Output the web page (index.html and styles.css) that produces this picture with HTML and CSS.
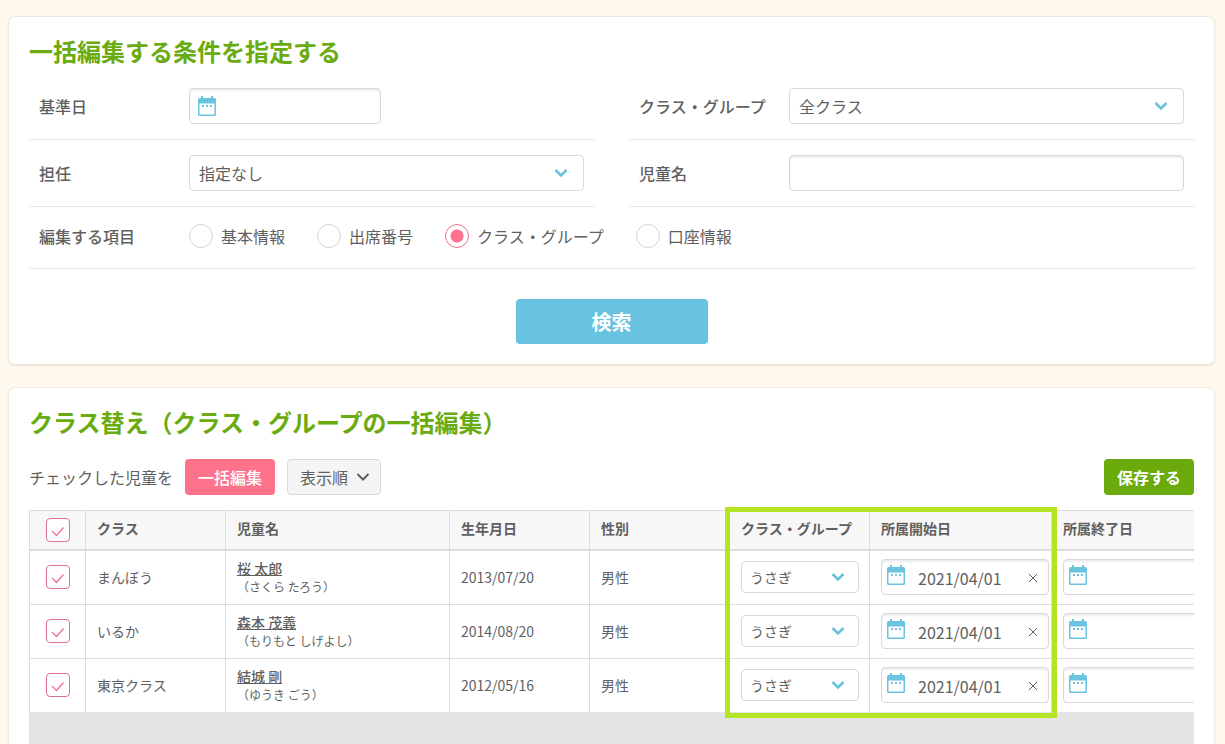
FILE: index.html
```html
<!DOCTYPE html>
<html lang="ja">
<head>
<meta charset="utf-8">
<meta name="viewport" content="width=device-width, initial-scale=1">
<title>クラス替え（クラス・グループの一括編集）</title>
<link rel="stylesheet" href="styles.css">
</head>
<body>
<svg class="sprite" aria-hidden="true">
  <symbol id="calendar" viewBox="0 0 20 22">
    <path fill="currentColor" fill-rule="evenodd" d="M4 1h2v2h8V1h2v2h1.500A1.500 1.500 0 0 1 19 4.500v15a1.500 1.500 0 0 1-1.500 1.500h-15A1.500 1.500 0 0 1 1 19.500v-15A1.500 1.500 0 0 1 2.500 3H4zM2.500 8.500v11h15v-11zM5 10h2v2H5zm4 0h2v2H9zm4 0h2v2h-2z"/>
  </symbol>
  <symbol id="chevron" viewBox="0 0 14 10">
    <path fill="none" stroke="currentColor" stroke-width="2.500" d="M1.500 2 7 7.500 12.500 2"/>
  </symbol>
  <symbol id="chevron-thin" viewBox="0 0 14 10">
    <path fill="none" stroke="currentColor" stroke-width="2" d="M1.500 2 7 7.500 12.500 2"/>
  </symbol>
</svg>
<main class="page">
  <form class="card search">
    <h2 class="title">一括編集する条件を指定する</h2>
    <div class="fields">
      <div class="field">
        <label class="label" for="base-date">基準日</label>
        <div class="control date date-short"><svg class="cal"><use href="#calendar"/></svg><input class="box inset" id="base-date" type="text"></div>
      </div>
      <div class="field">
        <label class="label" for="class-group">クラス・グループ</label>
        <div class="control"><select class="box" id="class-group"><option>全クラス</option></select><svg class="arrow"><use href="#chevron"/></svg></div>
      </div>
      <div class="field">
        <label class="label" for="teacher">担任</label>
        <div class="control"><select class="box" id="teacher"><option>指定なし</option></select><svg class="arrow"><use href="#chevron"/></svg></div>
      </div>
      <div class="field">
        <label class="label" for="child-name">児童名</label>
        <div class="control"><input class="box inset" id="child-name" type="text"></div>
      </div>
      <fieldset class="field field-wide" aria-labelledby="items-label">
        <span class="label" id="items-label">編集する項目</span>
        <div class="radios">
          <label class="option"><input class="radio" type="radio" name="item">基本情報</label>
          <label class="option"><input class="radio" type="radio" name="item">出席番号</label>
          <label class="option"><input class="radio" type="radio" name="item" checked>クラス・グループ</label>
          <label class="option"><input class="radio" type="radio" name="item">口座情報</label>
        </div>
      </fieldset>
    </div>
    <button class="submit" type="button">検索</button>
  </form>

  <section class="card results">
    <h2 class="title">クラス替え（クラス・グループの一括編集）</h2>
    <div class="toolbar">
      <span>チェックした児童を</span>
      <button class="btn btn-pink" type="button">一括編集</button>
      <button class="btn btn-gray" type="button">表示順<svg class="btn-arrow"><use href="#chevron-thin"/></svg></button>
      <button class="btn btn-green" type="button">保存する</button>
    </div>
    <div class="table-area">
      <div class="scroller">
        <table class="table">
          <colgroup><col class="c-check"><col class="c-mid"><col class="c-name"><col class="c-mid"><col class="c-mid"><col class="c-mid"><col class="c-date"><col class="c-date"></colgroup>
          <thead>
            <tr><th class="check-cell"><input class="check" type="checkbox" checked aria-label="すべて選択"></th><th>クラス</th><th>児童名</th><th>生年月日</th><th>性別</th><th>クラス・グループ</th><th>所属開始日</th><th>所属終了日</th></tr>
          </thead>
          <tbody>
            <tr>
              <td class="check-cell"><input class="check" type="checkbox" checked aria-label="桜 太郎"></td>
              <td>まんぼう</td>
              <td><a class="name" href="#">桜 太郎</a><span class="kana">（さくら たろう）</span></td>
              <td>2013/07/20</td><td>男性</td>
              <td><div class="control small"><select class="box" aria-label="クラス・グループ"><option>うさぎ</option></select><svg class="arrow"><use href="#chevron"/></svg></div></td>
              <td><div class="control date"><svg class="cal"><use href="#calendar"/></svg><input class="box inset" type="text" value="2021/04/01" aria-label="所属開始日"><button class="clear" type="button" aria-label="消去"><svg viewBox="0 0 10 10"><path d="M1 1l8 8M9 1 1 9"/></svg></button></div></td>
              <td><div class="control date"><svg class="cal"><use href="#calendar"/></svg><input class="box inset" type="text" aria-label="所属終了日"></div></td>
            </tr>
            <tr>
              <td class="check-cell"><input class="check" type="checkbox" checked aria-label="森本 茂義"></td>
              <td>いるか</td>
              <td><a class="name" href="#">森本 茂義</a><span class="kana">（もりもと しげよし）</span></td>
              <td>2014/08/20</td><td>男性</td>
              <td><div class="control small"><select class="box" aria-label="クラス・グループ"><option>うさぎ</option></select><svg class="arrow"><use href="#chevron"/></svg></div></td>
              <td><div class="control date"><svg class="cal"><use href="#calendar"/></svg><input class="box inset" type="text" value="2021/04/01" aria-label="所属開始日"><button class="clear" type="button" aria-label="消去"><svg viewBox="0 0 10 10"><path d="M1 1l8 8M9 1 1 9"/></svg></button></div></td>
              <td><div class="control date"><svg class="cal"><use href="#calendar"/></svg><input class="box inset" type="text" aria-label="所属終了日"></div></td>
            </tr>
            <tr>
              <td class="check-cell"><input class="check" type="checkbox" checked aria-label="結城 剛"></td>
              <td>東京クラス</td>
              <td><a class="name" href="#">結城 剛</a><span class="kana">（ゆうき ごう）</span></td>
              <td>2012/05/16</td><td>男性</td>
              <td><div class="control small"><select class="box" aria-label="クラス・グループ"><option>うさぎ</option></select><svg class="arrow"><use href="#chevron"/></svg></div></td>
              <td><div class="control date"><svg class="cal"><use href="#calendar"/></svg><input class="box inset" type="text" value="2021/04/01" aria-label="所属開始日"><button class="clear" type="button" aria-label="消去"><svg viewBox="0 0 10 10"><path d="M1 1l8 8M9 1 1 9"/></svg></button></div></td>
              <td><div class="control date"><svg class="cal"><use href="#calendar"/></svg><input class="box inset" type="text" aria-label="所属終了日"></div></td>
            </tr>
          </tbody>
        </table>
      </div>
      <div class="highlight"></div>
    </div>
  </section>
</main>
</body>
</html>
```

FILE: styles.css
```css
*, *::before, *::after { box-sizing: border-box; }

body {
  margin: 0;
  background: #fffaed;
  color: #5f5f5f;
  font: 16px/24px "Noto Sans CJK JP", sans-serif;
}

button, input, select { font: inherit; color: inherit; }

.sprite { position: absolute; width: 0; height: 0; }

.page {
  display: flex;
  flex-direction: column;
  gap: 22px;
  height: 100vh;
  padding: 16px 10px 0 8px;
  overflow: hidden;
}

.card {
  flex: none;
  padding: 16px 20px 20px;
  background: #fff;
  border: 1px solid #eeeae0;
  border-radius: 7px;
  box-shadow: 0 1px 2px #e8e3d6;
}

.title {
  margin: 0;
  color: #6aab10;
  font-size: 24px;
  line-height: 36px;
  font-weight: 700;
}

/* Search form */
.fields {
  display: grid;
  grid-template-columns: 1fr 1fr;
  column-gap: 35px;
  margin-top: 4px;
}

.field {
  display: flex;
  align-items: center;
  margin: 0;
  padding: 15px 10px;
  border: 0;
  border-bottom: 1px solid #e6e6e6;
}

.field-wide {
  grid-column: 1 / -1;
  height: 62px;
  padding: 14px 10px 17px;
}

.label { width: 150px; font-weight: 500; }

.control { position: relative; flex: 1; }

.box {
  display: block;
  width: 100%;
  height: 36px;
  margin: 0;
  padding: 0 9px;
  appearance: none;
  background: #fff;
  border: 1px solid #d9d9d9;
  border-radius: 4px;
  line-height: 24px;
}

.inset { box-shadow: inset 0 2px 2px #ececec; }

.date .box { padding: 2px 24px 0 36px; font-size: 16px; }
.date-short { flex: 0 1 192px; }

.cal {
  position: absolute;
  left: 5px;
  top: 5px;
  width: 20px;
  height: 22px;
  color: #6ac3df;
}

.date-short .cal { left: 8px; top: 7px; }

.arrow {
  position: absolute;
  right: 16px;
  top: 13px;
  width: 14px;
  height: 10px;
  color: #67c2dd;
  pointer-events: none;
}

.radios { display: flex; gap: 32px; }
.option { display: flex; align-items: center; gap: 8px; }

.radio {
  width: 24px;
  height: 24px;
  margin: 0;
  appearance: none;
  background: #fff;
  border: 1px solid #d6d6d6;
  border-radius: 50%;
}

.radio:checked {
  border-color: #f0708a;
  background: radial-gradient(circle, #ff728c 6px, #fff 7px);
}

.submit {
  display: block;
  width: 192px;
  height: 45px;
  margin: 30px auto 0;
  padding: 0;
  background: #67c3df;
  border: 0;
  border-radius: 4px;
  color: #fff;
  font-size: 20px;
  font-weight: 700;
}

/* Results */
.results {
  flex: 1;
  display: flex;
  flex-direction: column;
  padding-bottom: 0;
  border-bottom: 0;
  border-radius: 7px 7px 0 0;
}

.toolbar {
  display: flex;
  align-items: center;
  gap: 12px;
  margin: 19px 0 15px;
}

.btn {
  height: 36px;
  padding: 0 13px;
  border: 0;
  border-radius: 4px;
  color: #fff;
  font-weight: 500;
}

.btn-pink { background: #ff728c; }
.btn-green { margin-left: auto; background: #6aab0b; font-weight: 700; }

.btn-gray {
  display: flex;
  align-items: center;
  gap: 8px;
  padding: 0 10px 0 12px;
  background: #f5f5f5;
  border: 1px solid #d9d9d9;
  color: #5f5f5f;
  font-weight: 400;
}

.btn-arrow { width: 14px; height: 10px; }

.table-area { position: relative; flex: 1; display: flex; }

.scroller { flex: 1; min-width: 0; overflow: hidden; background: #e4e4e4; }

.table {
  width: 1204px;
  table-layout: fixed;
  border-spacing: 0;
  background: #fff;
  font-size: 14px;
  line-height: 20px;
}

.c-check { width: 56px; }
.c-mid { width: 140px; }
.c-name { width: 224px; }
.c-date { width: 182px; }

.table th, .table td {
  height: 54px;
  padding: 0 2px 2px 11px;
  border-left: 1px solid #dcdcdc;
  border-bottom: 1px solid #dcdcdc;
  text-align: left;
}

.table th {
  height: 41px;
  padding-bottom: 4px;
  background: #f7f7f7;
  border-top: 1px solid #dcdcdc;
  border-bottom-width: 2px;
  font-weight: 700;
}

.table tbody tr:last-child td { border-bottom-color: #e4e4e4; }

.table td.check-cell { padding: 0 0 2px; }
.table th.check-cell { padding: 0; }

.check {
  display: block;
  width: 24px;
  height: 24px;
  margin: 0 auto;
  appearance: none;
  background: #fff url("data:image/svg+xml,%3Csvg xmlns='http://www.w3.org/2000/svg' viewBox='0 0 24 24'%3E%3Cpath d='M6 13l4.500 4.500 7-8' fill='none' stroke='%23e8708a' stroke-width='1.200'/%3E%3C/svg%3E") center / 24px;
  border: 1px solid #df718b;
  border-radius: 4px;
}

.name { display: block; color: inherit; font-weight: 500; }
.kana { display: block; font-size: 12px; line-height: 18px; }

.small { width: 118px; }
.small .box { height: 32px; padding: 0 8px; font-size: 14px; }
.small .arrow { right: 14px; top: 11px; }

.clear {
  position: absolute;
  right: 10px;
  top: 13px;
  width: 12px;
  height: 12px;
  padding: 1px;
  border: 0;
  background: none;
}

.clear svg { display: block; width: 10px; height: 10px; }
.clear path { fill: none; stroke: #5f5f5f; }

/* Marker frame over the group and start-date columns */
.highlight {
  position: absolute;
  left: 696px;
  top: -3px;
  width: 332px;
  height: 211px;
  border: 5px solid #b4e522;
  pointer-events: none;
}
```
